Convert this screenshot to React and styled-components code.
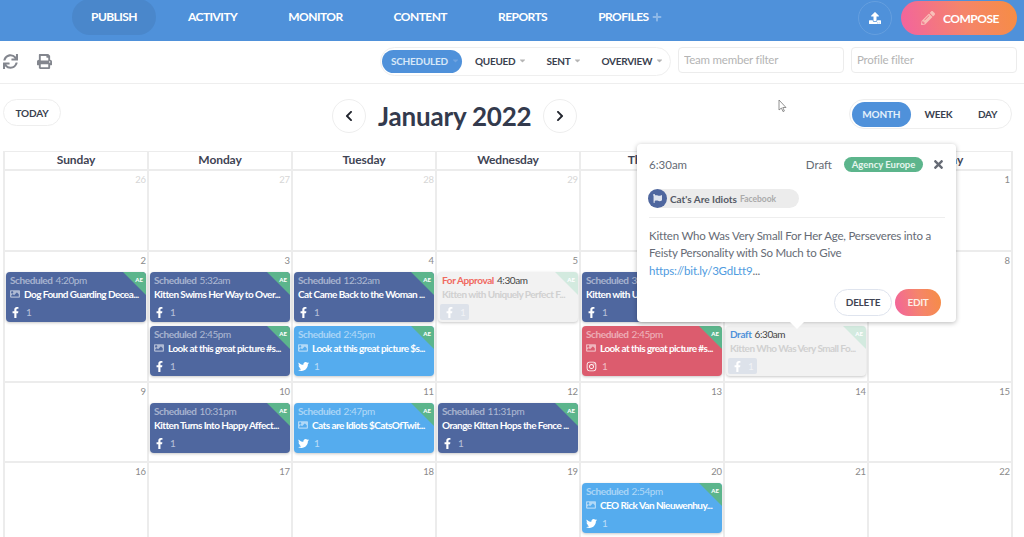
import React from 'react';
import styled, { createGlobalStyle, css } from 'styled-components';
import {
  FaCaretDown,
  FaChevronLeft,
  FaChevronRight,
  FaFacebookF,
  FaFlag,
  FaImage,
  FaInstagram,
  FaPencilAlt,
  FaPlus,
  FaPrint,
  FaSync,
  FaTimes,
  FaTwitter,
  FaUpload,
} from 'react-icons/fa';

const GlobalStyle = createGlobalStyle`
  html, body {
    margin: 0;
    height: 537px;
    overflow: hidden;
    background: #fff;
    font-family: Lato, "Open Sans", sans-serif;
    color: #3a3f4f;
  }
  * { box-sizing: border-box; }
`;

const Page = styled.div`
  position: relative;
  width: 1024px;
  height: 537px;
  overflow: hidden;
`;

const orangePink = 'linear-gradient(75deg, #f2639f 0%, #f5856a 55%, #f68d42 100%)';

// top bar
const NavBar = styled.nav`
  display: flex;
  align-items: flex-start;
  height: 41px;
  padding-left: 72px;
  background: #4f91da;
`;

const NavItem = styled.div`
  display: flex;
  align-items: center;
  gap: 3px;
  height: 35px;
  padding: 0 19px 2px;
  margin-right: 13px;
  color: #fff;
  font-size: 12px;
  font-weight: 700;
  letter-spacing: -0.55px;
  background: ${({ $active }) => ($active ? '#4a87cb' : 'transparent')};
  ${({ $active }) => $active && 'border-radius: 18px; margin-top: -1px; height: 36px;'}
  svg { color: #8db8e8; font-size: 10px; }
`;

const NavRight = styled.div`
  display: flex;
  gap: 9px;
  margin-left: auto;
  margin-right: 7px;
  padding-top: 1px;
`;

const UploadButton = styled.div`
  display: flex;
  align-items: center;
  justify-content: center;
  width: 34px;
  height: 34px;
  border: 1px solid #659fdf;
  border-radius: 50%;
  color: #fff;
  font-size: 12px;
`;

const ComposeButton = styled.div`
  display: flex;
  align-items: center;
  gap: 8px;
  width: 116px;
  height: 34px;
  padding-left: 20px;
  border-radius: 17px;
  background: ${orangePink};
  color: #fff;
  font-size: 12px;
  font-weight: 700;
  letter-spacing: -0.5px;
  svg { color: #f8c0b8; font-size: 14px; }
`;

// filter toolbar
const Toolbar = styled.div`
  display: flex;
  align-items: flex-start;
  height: 43px;
  padding: 6px 7px 0 3px;
  border-bottom: 1px solid #eeeeee;
`;

const ToolIcons = styled.div`
  display: flex;
  align-items: center;
  gap: 19px;
  width: 50px;
  height: 28px;
  color: #83868e;
  font-size: 15px;
  svg { flex-shrink: 0; }
`;

const Segmented = styled.div`
  display: flex;
  align-items: center;
  width: 291px;
  height: 29px;
  margin-left: 327px;
  padding: 0 1px;
  border: 1px solid #efefef;
  border-radius: 15px;
`;

const Segment = styled.div`
  display: flex;
  align-items: center;
  height: 23px;
  margin-right: ${({ $gap }) => $gap}px;
  padding: ${({ $active }) => ($active ? '0 2px 2px 9px' : '0 0 2px')};
  border-radius: 12px;
  font-size: 10px;
  font-weight: 700;
  letter-spacing: -0.25px;
  color: ${({ $active }) => ($active ? '#d8e8f8' : '#3a3f4f')};
  background: ${({ $active }) => ($active ? '#4f91da' : 'transparent')};
  svg { margin-left: 3px; font-size: 9px; color: ${({ $active }) => ($active ? '#6fa3e0' : '#b5b5b5')}; }
`;

const FilterInput = styled.input`
  width: 166px;
  height: 26px;
  margin-left: ${({ $gap }) => $gap}px;
  padding: 0 6px 2px 5px;
  border: 1px solid #ececec;
  border-radius: 4px;
  font-family: inherit;
  font-size: 11.5px;
  letter-spacing: -0.2px;
  &::placeholder { color: #b4b4b4; opacity: 1; }
`;

// month title row
const TitleRow = styled.div`
  display: flex;
  align-items: flex-start;
  height: 67px;
  padding: 15px 12px 0 3px;
`;

const TodayButton = styled.div`
  display: flex;
  align-items: center;
  justify-content: center;
  width: 58px;
  height: 27px;
  border: 1px solid #eeeeee;
  border-radius: 14px;
  font-size: 10px;
  font-weight: 700;
  letter-spacing: -0.2px;
`;

const MonthNav = styled.div`
  display: flex;
  align-items: center;
  gap: 12px;
  margin-left: 271px;
`;

const RoundButton = styled.div`
  display: flex;
  align-items: center;
  justify-content: center;
  width: 34px;
  height: 34px;
  border: 1px solid #eeeeee;
  border-radius: 50%;
  color: #22252e;
  font-size: 12px;
`;

const MonthTitle = styled.h1`
  margin: 0;
  font-size: 26px;
  font-weight: 700;
  letter-spacing: -0.2px;
  line-height: 34px;
  color: #333a4d;
`;

const ViewSwitch = styled.div`
  display: flex;
  align-items: center;
  width: 163px;
  height: 30px;
  margin-left: auto;
  padding: 0 2px;
  border: 1px solid #eeeeee;
  border-radius: 15px;
`;

const ViewOption = styled.div`
  display: flex;
  align-items: center;
  justify-content: center;
  width: ${({ $width }) => $width}px;
  height: 25px;
  border-radius: 13px;
  font-size: 10px;
  font-weight: 700;
  letter-spacing: -0.2px;
  color: ${({ $active }) => ($active ? '#e4f0fb' : '#3a3f4f')};
  background: ${({ $active }) => ($active ? '#4f91da' : 'transparent')};
`;

// calendar
const Calendar = styled.div`
  display: grid;
  grid-template-columns: repeat(7, 142px);
  grid-template-rows: 17px 79px 129px 78px 100px;
  gap: 2px;
  width: 1010px;
  margin-left: 3px;
  padding: 1px 0 0 2px;
  background: #ececec;
`;

const DayName = styled.div`
  display: flex;
  align-items: center;
  justify-content: center;
  padding-bottom: 2px;
  background: #fff;
  font-size: 12px;
  font-weight: 700;
  letter-spacing: -0.1px;
  color: #3f4454;
`;

const Cell = styled.div`
  min-width: 0;
  padding-left: 1px;
  background: #fff;
`;

const DateNum = styled.div`
  height: 20px;
  padding-right: 1px;
  text-align: right;
  font-size: 9.5px;
  letter-spacing: -0.1px;
  line-height: 18px;
  color: ${({ $muted }) => ($muted ? '#d6d6d6' : '#8a8a8a')};
`;

const cardBackgrounds = {
  facebook: '#4f679f',
  twitter: '#55acee',
  instagram: '#dc5c6e',
  pending: '#f2f2f2',
};

const Card = styled.div`
  position: relative;
  width: 140px;
  height: 50px;
  margin-bottom: 4px;
  padding: 1px 5px 0 4px;
  overflow: hidden;
  border-radius: 4px;
  background: ${({ $kind }) => cardBackgrounds[$kind]};
  box-shadow: 0 1px 3px rgba(0, 0, 0, 0.22);
  font-size: 10px;
  letter-spacing: -0.4px;
  line-height: 14px;
  white-space: nowrap;
  color: #fff;
`;

const Corner = styled.div`
  position: absolute;
  top: 0;
  right: 0;
  width: 23px;
  height: 23px;
  clip-path: polygon(0 0, 100% 0, 100% 100%);
  background: ${({ $faded }) => ($faded ? '#d3eadf' : '#5cb58c')};
  color: #fff;
  font-size: 6px;
  font-weight: 900;
  letter-spacing: 0;
  line-height: 15px;
  text-align: right;
  padding-right: 3px;
`;

const statusColors = {
  Scheduled: 'rgba(255, 255, 255, 0.5)',
  Draft: '#4f91da',
  'For Approval': '#f0695f',
};

const Status = styled.span`
  font-weight: 700;
  color: ${({ $status }) => statusColors[$status]};
`;

const CardTime = styled.span`
  margin-left: 3px;
  color: ${({ $pending }) => ($pending ? '#444' : 'rgba(255, 255, 255, 0.55)')};
`;

const CardTitle = styled.div`
  display: flex;
  align-items: center;
  gap: 4px;
  font-weight: 700;
  letter-spacing: -0.55px;
  color: ${({ $pending }) => ($pending ? '#d0d0d0' : '#fff')};
  svg { flex-shrink: 0; font-size: 10px; color: rgba(255, 255, 255, 0.55); }
`;

const CardFoot = styled.div`
  display: inline-flex;
  align-items: center;
  gap: 5px;
  height: 16px;
  margin-top: 3px;
  font-size: 10px;
  color: rgba(255, 255, 255, 0.6);
  svg { font-size: 11px; color: #fff; }
  ${({ $pending }) =>
    $pending &&
    css`
      margin-left: -2px;
      padding: 0 4px;
      border-radius: 2px;
      background: #dde2ea;
    `}
`;

// popover over the draft card
const Popover = styled.div`
  position: absolute;
  left: 637px;
  top: 144px;
  width: 319px;
  height: 178px;
  padding: 11px 12px;
  border-radius: 4px;
  background: #fff;
  box-shadow: 0 1px 5px rgba(0, 0, 0, 0.28);
  &::after {
    content: '';
    position: absolute;
    left: 153px;
    bottom: -7px;
    border-left: 7px solid transparent;
    border-right: 7px solid transparent;
    border-top: 7px solid #fff;
  }
`;

const PopHead = styled.div`
  display: flex;
  align-items: center;
  height: 18px;
  font-size: 11.5px;
  color: #666b75;
`;

const PopDraft = styled.span`
  margin-left: auto;
`;

const AgencyPill = styled.span`
  width: 79px;
  height: 15px;
  margin-left: 12px;
  border-radius: 8px;
  background: #5cb58c;
  color: #e6f5ee;
  font-size: 9.5px;
  font-weight: 700;
  line-height: 15px;
  text-align: center;
`;

const CloseIcon = styled(FaTimes)`
  margin-left: 9px;
  margin-right: -1px;
  font-size: 13px;
  color: #666b75;
`;

const ProfileChip = styled.div`
  display: flex;
  align-items: center;
  width: 151px;
  height: 19px;
  margin-top: 16px;
  margin-left: -1px;
  border-radius: 10px;
  background: #ececec;
  font-size: 10px;
  font-weight: 700;
  color: #555a66;
`;

const ChipAvatar = styled.span`
  display: flex;
  align-items: center;
  justify-content: center;
  width: 19px;
  height: 19px;
  margin-right: 3px;
  border-radius: 50%;
  background: #4f679f;
  color: #dfe4ef;
  font-size: 9px;
`;

const ChipNetwork = styled.span`
  margin-left: 3px;
  font-size: 8.5px;
  color: #aaa;
`;

const PopBody = styled.div`
  margin-top: 9px;
  padding-top: 8.5px;
  border-top: 1px solid #eeeeee;
  width: 296px;
  font-size: 11.5px;
  letter-spacing: -0.2px;
  line-height: 17.5px;
  color: #666b75;
`;

const PopLink = styled.a`
  color: #4f9be0;
`;

const PopActions = styled.div`
  display: flex;
  justify-content: flex-end;
  gap: 3px;
  margin-top: 9.5px;
  margin-right: 3px;
`;

const PopButton = styled.div`
  display: flex;
  align-items: center;
  justify-content: center;
  width: ${({ $primary }) => ($primary ? 46 : 58)}px;
  height: 27px;
  border-radius: 14px;
  font-size: 10px;
  font-weight: 700;
  letter-spacing: -0.3px;
  ${({ $primary }) =>
    $primary
      ? css`
          background: ${orangePink};
          color: #fdeee6;
        `
      : css`
          border: 1px solid #dfe4ee;
          color: #3f4454;
        `}
`;

const Pointer = styled.svg`
  position: absolute;
  left: 778px;
  top: 99px;
`;

const PushedSlot = styled.div`
  height: 54px;
`;

const navItems = ['PUBLISH', 'ACTIVITY', 'MONITOR', 'CONTENT', 'REPORTS'];
const dayNames = ['Sunday', 'Monday', 'Tuesday', 'Wednesday', 'Thursday', 'Friday', 'Saturday'];

const card = (kind, status, time, title, image) => ({ kind, status, time, title, image });

const weeks = [
  [
    { n: 26, muted: true },
    { n: 27, muted: true },
    { n: 28, muted: true },
    { n: 29, muted: true },
    { n: 30, muted: true },
    { n: 31, muted: true },
    { n: 1 },
  ],
  [
    { n: 2, cards: [card('facebook', 'Scheduled', '4:20pm', 'Dog Found Guarding Decea...', true)] },
    {
      n: 3,
      cards: [
        card('facebook', 'Scheduled', '5:32am', 'Kitten Swims Her Way to Over...'),
        card('facebook', 'Scheduled', '2:45pm', 'Look at this great picture #s...', true),
      ],
    },
    {
      n: 4,
      cards: [
        card('facebook', 'Scheduled', '12:32am', 'Cat Came Back to the Woman ...'),
        card('twitter', 'Scheduled', '2:45pm', 'Look at this great picture $s...', true),
      ],
    },
    { n: 5, cards: [card('pending', 'For Approval', '4:30am', 'Kitten with Uniquely Perfect F...')] },
    {
      n: 6,
      cards: [
        card('facebook', 'Scheduled', '3:30am', 'Kitten with Uniquely Perfect F...'),
        card('instagram', 'Scheduled', '2:45pm', 'Look at this great picture #s...', true),
      ],
    },
    {
      n: 7,
      cards: [card('pending', 'Draft', '6:30am', 'Kitten Who Was Very Small Fo...')],
      pushed: true,
    },
    { n: 8 },
  ],
  [
    { n: 9 },
    { n: 10, cards: [card('facebook', 'Scheduled', '10:31pm', 'Kitten Turns Into Happy Affect...')] },
    { n: 11, cards: [card('twitter', 'Scheduled', '2:47pm', 'Cats are Idiots $CatsOfTwit...', true)] },
    { n: 12, cards: [card('facebook', 'Scheduled', '11:31pm', 'Orange Kitten Hops the Fence ...')] },
    { n: 13 },
    { n: 14 },
    { n: 15 },
  ],
  [
    { n: 16 },
    { n: 17 },
    { n: 18 },
    { n: 19 },
    { n: 20, cards: [card('twitter', 'Scheduled', '2:54pm', 'CEO Rick Van Nieuwenhuy...', true)] },
    { n: 21 },
    { n: 22 },
  ],
];

const networkIcons = {
  facebook: FaFacebookF,
  twitter: FaTwitter,
  instagram: FaInstagram,
  pending: FaFacebookF,
};

const PostCard = ({ post }) => {
  const pending = post.kind === 'pending';
  const Icon = networkIcons[post.kind];
  return (
    <Card $kind={post.kind}>
      <Corner $faded={pending}>AE</Corner>
      <Status $status={post.status}>{post.status}</Status>
      <CardTime $pending={pending}>{post.time}</CardTime>
      <CardTitle $pending={pending}>
        {post.image && <FaImage />}
        {post.title}
      </CardTitle>
      <CardFoot $pending={pending}>
        <Icon />1
      </CardFoot>
    </Card>
  );
};

const App = () => (
  <Page>
    <GlobalStyle />
    <NavBar>
      {navItems.map((item, i) => (
        <NavItem key={item} $active={i === 0}>
          {item}
        </NavItem>
      ))}
      <NavItem>
        PROFILES <FaPlus />
      </NavItem>
      <NavRight>
        <UploadButton>
          <FaUpload />
        </UploadButton>
        <ComposeButton>
          <FaPencilAlt />
          COMPOSE
        </ComposeButton>
      </NavRight>
    </NavBar>

    <Toolbar>
      <ToolIcons>
        <FaSync />
        <FaPrint />
      </ToolIcons>
      <Segmented>
        <Segment $active $gap={13}>SCHEDULED <FaCaretDown /></Segment>
        <Segment $gap={19}>QUEUED <FaCaretDown /></Segment>
        <Segment $gap={19}>SENT <FaCaretDown /></Segment>
        <Segment $gap={0}>OVERVIEW <FaCaretDown /></Segment>
      </Segmented>
      <FilterInput $gap={7} placeholder="Team member filter" />
      <FilterInput $gap={7} placeholder="Profile filter" />
    </Toolbar>

    <TitleRow>
      <TodayButton>TODAY</TodayButton>
      <MonthNav>
        <RoundButton><FaChevronLeft /></RoundButton>
        <MonthTitle>January 2022</MonthTitle>
        <RoundButton><FaChevronRight /></RoundButton>
      </MonthNav>
      <ViewSwitch>
        <ViewOption $active $width={59}>MONTH</ViewOption>
        <ViewOption $width={56}>WEEK</ViewOption>
        <ViewOption $width={43}>DAY</ViewOption>
      </ViewSwitch>
    </TitleRow>

    <Calendar>
      {dayNames.map((name) => (
        <DayName key={name}>{name}</DayName>
      ))}
      {weeks.flat().map((day) => (
        <Cell key={day.n}>
          <DateNum $muted={day.muted}>{day.n}</DateNum>
          {day.pushed && <PushedSlot />}
          {(day.cards || []).map((post) => (
            <PostCard key={post.title + post.time} post={post} />
          ))}
        </Cell>
      ))}
    </Calendar>

    <Popover>
      <PopHead>
        6:30am
        <PopDraft>Draft</PopDraft>
        <AgencyPill>Agency Europe</AgencyPill>
        <CloseIcon />
      </PopHead>
      <ProfileChip>
        <ChipAvatar><FaFlag /></ChipAvatar>
        Cat's Are Idiots
        <ChipNetwork>Facebook</ChipNetwork>
      </ProfileChip>
      <PopBody>
        Kitten Who Was Very Small For Her Age, Perseveres into a Feisty Personality with So Much to Give{' '}
        <PopLink>https://bit.ly/3GdLtt9</PopLink>...
      </PopBody>
      <PopActions>
        <PopButton>DELETE</PopButton>
        <PopButton $primary>EDIT</PopButton>
      </PopActions>
    </Popover>

    <Pointer width="9" height="14" viewBox="0 0 9 14">
      <path d="M1 1v10l2.4-2 1.6 3.6 1.4-.6-1.6-3.5H8z" fill="#fff" stroke="#777" strokeWidth="0.8" />
    </Pointer>
  </Page>
);

export default App;
